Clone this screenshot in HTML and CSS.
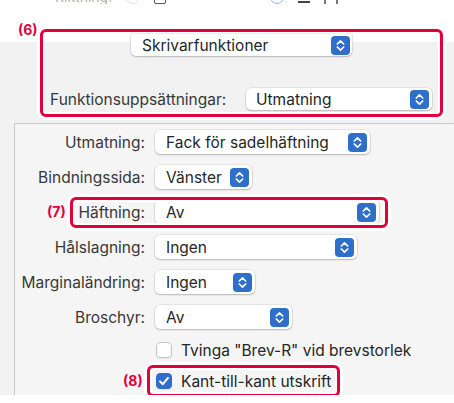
FILE: index.html
```html
<!DOCTYPE html>
<html lang="sv">
<head>
  <meta charset="UTF-8" />
  <title>Skrivarfunktioner</title>
  <link rel="stylesheet" href="styles.css">
</head>
<body>
  <div class="page">
    <div class="cutoff">
      <span class="cut-label">Riktning:</span>
      <span class="radio"></span>
      <span class="cut-icon"></span>
      <span class="radio on"></span>
      <span class="cut-bar"></span>
      <span class="cut-pair"></span>
    </div>

    <div class="head">
      <span class="tag tag-6">(6)</span>
      <div class="annot-6">
        <div class="popup popup-set">
          <span class="popup-text">Skrivarfunktioner</span>
          <span class="stepper">
            <svg width="19" height="19" viewBox="0 0 19 19"><path d="M6.3 8 9.5 4.9 12.7 8M6.3 11 9.5 14.1 12.7 11" /></svg>
          </span>
        </div>
        <div class="setrow">
          <span class="set-label">Funktionsuppsättningar:</span>
          <div class="popup popup-fs">
            <span class="popup-text">Utmatning</span>
            <span class="stepper">
              <svg width="19" height="19" viewBox="0 0 19 19"><path d="M6.3 8 9.5 4.9 12.7 8M6.3 11 9.5 14.1 12.7 11" /></svg>
            </span>
          </div>
        </div>
      </div>
    </div>

    <div class="panel">
      <div class="form">
        <div class="row">
          <span class="label">Utmatning:</span>
          <div class="popup w-215">
            <span class="popup-text">Fack för sadelhäftning</span>
            <span class="stepper"><svg width="19" height="19" viewBox="0 0 19 19"><path d="M6.3 8 9.5 4.9 12.7 8M6.3 11 9.5 14.1 12.7 11" /></svg></span>
          </div>
        </div>
        <div class="row">
          <span class="label">Bindningssida:</span>
          <div class="popup w-97">
            <span class="popup-text">Vänster</span>
            <span class="stepper"><svg width="19" height="19" viewBox="0 0 19 19"><path d="M6.3 8 9.5 4.9 12.7 8M6.3 11 9.5 14.1 12.7 11" /></svg></span>
          </div>
        </div>
        <div class="row">
          <span class="tag tag-7">(7)</span>
          <span class="annot annot-7"></span>
          <span class="label">Häftning:</span>
          <div class="popup w-224">
            <span class="popup-text">Av</span>
            <span class="stepper"><svg width="19" height="19" viewBox="0 0 19 19"><path d="M6.3 8 9.5 4.9 12.7 8M6.3 11 9.5 14.1 12.7 11" /></svg></span>
          </div>
        </div>
        <div class="row">
          <span class="label">Hålslagning:</span>
          <div class="popup w-202">
            <span class="popup-text">Ingen</span>
            <span class="stepper"><svg width="19" height="19" viewBox="0 0 19 19"><path d="M6.3 8 9.5 4.9 12.7 8M6.3 11 9.5 14.1 12.7 11" /></svg></span>
          </div>
        </div>
        <div class="row">
          <span class="label">Marginaländring:</span>
          <div class="popup w-100">
            <span class="popup-text">Ingen</span>
            <span class="stepper"><svg width="19" height="19" viewBox="0 0 19 19"><path d="M6.3 8 9.5 4.9 12.7 8M6.3 11 9.5 14.1 12.7 11" /></svg></span>
          </div>
        </div>
        <div class="row">
          <span class="label">Broschyr:</span>
          <div class="popup w-137">
            <span class="popup-text">Av</span>
            <span class="stepper"><svg width="19" height="19" viewBox="0 0 19 19"><path d="M6.3 8 9.5 4.9 12.7 8M6.3 11 9.5 14.1 12.7 11" /></svg></span>
          </div>
        </div>
        <div class="check-row">
          <span class="checkbox"></span>
          <span class="check-text">Tvinga "Brev-R" vid brevstorlek</span>
        </div>
        <div class="check-row">
          <span class="tag tag-8">(8)</span>
          <span class="annot annot-8"></span>
          <span class="checkbox checked">
            <svg width="16" height="16" viewBox="0 0 16 16"><path d="M4 8.4 6.8 11.2 12 4.9" /></svg>
          </span>
          <span class="check-text">Kant-till-kant utskrift</span>
        </div>
      </div>
    </div>
  </div>
</body>
</html>
```

FILE: styles.css
```css
:root {
  --red: #e2003b;
  --blue: #2f6fca;
  --text: #262626;
  --label: #383838;
  --bg: #f2f2f2;
  --panel: #f5f5f5;
}
body {
  margin: 0;
  background: #fff;
  font-family: Inter, "Open Sans", sans-serif;
  font-size: 15.5px;
  color: var(--text);
}
.page {
  height: 395px;
  background: linear-gradient(#fff 0 42px, var(--bg) 42px);
}

/* cut-off row at the very top */
.cutoff {
  height: 4px;
  overflow: hidden;
  display: flex;
  align-items: flex-end;
  gap: 14px;
  padding-left: 55px;
}
.cut-label {
  color: #b0b0b0;
  font-size: 14px;
  line-height: 14px;
  margin-bottom: 0;
}
.radio {
  width: 12px;
  height: 12px;
  border-radius: 50%;
  border: 1px solid #e0e0e0;
  background: #fff;
}
.radio.on {
  border-color: #8fb2e6;
  margin-left: 90px;
}
.cut-icon {
  width: 10px;
  height: 12px;
  border: 1.5px solid #555;
  border-radius: 2px;
}
.cut-bar {
  width: 12px;
  height: 2px;
  background: #444;
  margin-bottom: 1px;
}
.cut-pair {
  width: 10px;
  height: 6px;
  border-left: 2px solid #777;
  border-right: 2px solid #777;
}

/* annotation tags and boxes */
.tag {
  color: var(--red);
  font-weight: 700;
  font-size: 14px;
  line-height: 16px;
}
.annot-6,
.annot {
  border: 3px solid var(--red);
  border-radius: 6px;
  box-shadow: 0 0 0 3px #fff, inset 0 0 0 2px #fff;
  box-sizing: border-box;
}
.annot {
  position: absolute;
  pointer-events: none;
}

.head {
  display: flex;
  align-items: flex-start;
  padding-left: 18px;
  margin-top: 25px;
}
.tag-6 {
  width: 22px;
  margin-top: -7px;
}
.annot-6 {
  width: 403px;
  height: 88px;
  padding: 2px 0 0;
}

/* popup buttons */
.popup {
  display: flex;
  align-items: center;
  justify-content: space-between;
  box-sizing: border-box;
  height: 24px;
  padding: 0 3px 0 11px;
  background: #fff;
  border-radius: 5px;
  box-shadow: 0 0 0 0.5px rgba(0, 0, 0, 0.12), 0 1px 2px rgba(0, 0, 0, 0.2);
}
.popup-text {
  white-space: nowrap;
}
.stepper {
  width: 19px;
  height: 19px;
  border-radius: 4px;
  background: var(--blue);
  display: flex;
}
.stepper path,
.checkbox path {
  fill: none;
  stroke: #fff;
  stroke-width: 1.7;
  stroke-linecap: round;
  stroke-linejoin: round;
}
.popup-set {
  width: 221px;
  height: 22px;
  margin-left: 88px;
  padding-right: 2px;
  border-radius: 0 0 5px 5px;
}
.setrow {
  display: flex;
  align-items: center;
  justify-content: space-between;
  margin-top: 32px;
  padding: 0 8px 0 7px;
}
.set-label {
  color: var(--label);
}
.popup-fs {
  width: 186px;
  height: 22px;
  padding-left: 10px;
}

/* settings panel */
.panel {
  margin: 6px 0 0 14px;
  height: 272px;
  box-sizing: border-box;
  border-top: 1px solid #c9c9c9;
  border-left: 1px solid #c9c9c9;
  background: var(--panel);
}
.form {
  display: flex;
  flex-direction: column;
  gap: 11px;
  padding-top: 6px;
}
.row {
  position: relative;
  display: flex;
  align-items: center;
  gap: 10px;
  height: 24px;
}
.label {
  width: 130px;
  text-align: right;
  color: var(--label);
  white-space: nowrap;
}
.w-215 { width: 215px; }
.w-97 { width: 97px; }
.w-224 { width: 224px; }
.w-202 { width: 202px; }
.w-100 { width: 100px; }
.w-137 { width: 137px; }

.tag-7,
.tag-8 {
  position: absolute;
  top: 50%;
  transform: translateY(-50%);
}
.tag-7 { left: 32px; }
.annot-7 {
  left: 55px;
  top: -3px;
  width: 318px;
  height: 31px;
}

/* checkboxes */
.check-row {
  position: relative;
  display: flex;
  align-items: center;
  gap: 9px;
  height: 20px;
  padding-left: 141px;
}
.checkbox {
  width: 16px;
  height: 16px;
  box-sizing: border-box;
  border-radius: 4px;
  background: #fff;
  border: 1px solid #c4c4c4;
  box-shadow: 0 1px 1px rgba(0, 0, 0, 0.06);
  display: flex;
}
.checkbox.checked {
  background: var(--blue);
  border-color: var(--blue);
}
.checkbox.checked svg {
  margin: -1px;
}
.checkbox.checked path {
  stroke-width: 2;
}
.check-text {
  white-space: nowrap;
}
.tag-8 { left: 108px; }
.annot-8 {
  left: 132px;
  top: -6px;
  width: 193px;
  height: 32px;
}
```
